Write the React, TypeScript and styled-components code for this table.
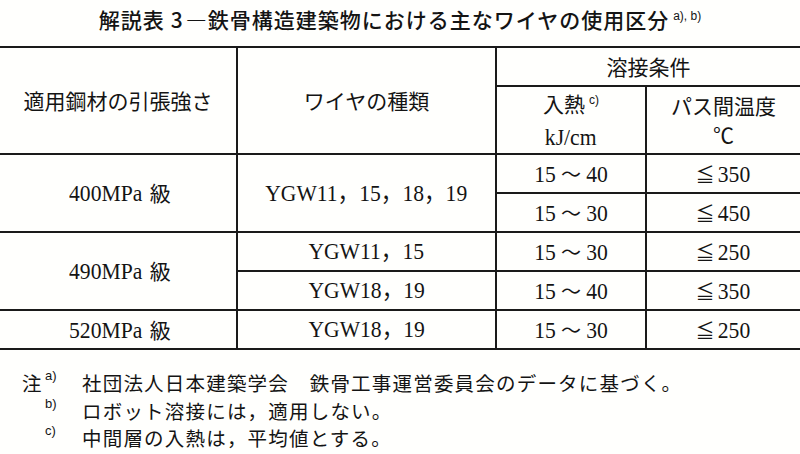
import React from "react";
import styled, { createGlobalStyle } from "styled-components";

const Global = createGlobalStyle`
  html, body { margin: 0; padding: 0; background: #ffffff; }
  body {
    font-family: "Liberation Serif", "Noto Sans CJK JP", serif;
    color: #141414;
  }
`;

const Page = styled.div`
  width: 800px;
  height: 454px;
  overflow: hidden;
  background: #fffffd;
  display: flex;
  flex-direction: column;
`;

const Title = styled.h1`
  margin: 0;
  height: 46px;
  box-sizing: border-box;
  padding-top: 5px;
  text-align: center;
  font-family: "Noto Sans CJK JP", sans-serif;
  font-size: 21px;
  font-weight: 500;
  line-height: 28px;
  letter-spacing: 1px;
  white-space: nowrap;
`;

const TitleNum = styled.span`
  margin: 0 2px 0 6px;
`;

const Sup = styled.span`
  font-family: "Liberation Sans", sans-serif;
  font-size: 12px;
  font-weight: 400;
  letter-spacing: 0;
  position: relative;
  top: -8px;
  margin-left: 4px;
`;

const Grid = styled.div`
  display: grid;
  grid-template-columns: 238px 259px 150px 1fr;
  grid-template-rows: 39px 68px repeat(5, 39px);
  border-top: 2px solid #1a1a1a;
`;

const Cell = styled.div<{ $col: string; $row: string; $last?: boolean }>`
  grid-column: ${(p) => p.$col};
  grid-row: ${(p) => p.$row};
  box-sizing: border-box;
  display: flex;
  flex-direction: column;
  align-items: center;
  justify-content: center;
  border-bottom: 2px solid #1a1a1a;
  border-right: ${(p) => (p.$last ? "none" : "2px solid #1a1a1a")};
  font-family: "Noto Sans CJK JP", sans-serif;
  font-size: 21px;
  line-height: 29px;
  white-space: nowrap;
`;

const Line = styled.div`
  display: flex;
  align-items: baseline;
  justify-content: center;
`;

const Num = styled.span`
  display: inline-block;
  font-family: "Liberation Serif", "Noto Sans CJK JP", serif;
  font-size: 24px;
  transform: scaleX(0.9);
`;

const Tilde = styled.span`
  font-family: "Noto Sans CJK JP", sans-serif;
  font-size: 20px;
  margin: 0 4px;
`;

const Le = styled.span`
  font-family: "Noto Sans CJK JP", sans-serif;
  font-size: 19px;
  margin-right: 1px;
`;

const Gap = styled.span`
  display: inline-block;
  width: 3px;
`;

const Notes = styled.div`
  padding-top: 19px;
  display: flex;
  flex-direction: column;
  font-family: "Noto Sans CJK JP", sans-serif;
  font-size: 19.5px;
  letter-spacing: 1.2px;
  line-height: 27.5px;
`;

const NoteRow = styled.div`
  display: flex;
  white-space: nowrap;
`;

const NoteMark = styled.div`
  width: 82px;
  box-sizing: border-box;
  padding-left: 22px;
  display: flex;
`;

const NoteLabel = styled.span`
  width: 19px;
`;

const NoteSup = styled(Sup)`
  font-size: 13px;
  top: -7px;
`;

type Body = { col: string; row: string; last?: boolean; kind: "grade" | "wire" | "heat" | "temp"; value: string };

const body: Body[] = [
  { col: "1", row: "3 / 5", kind: "grade", value: "400MPa" },
  { col: "2", row: "3 / 5", kind: "wire", value: "YGW11，15，18，19" },
  { col: "3", row: "3", kind: "heat", value: "15-40" },
  { col: "4", row: "3", kind: "temp", value: "350", last: true },
  { col: "3", row: "4", kind: "heat", value: "15-30" },
  { col: "4", row: "4", kind: "temp", value: "450", last: true },
  { col: "1", row: "5 / 7", kind: "grade", value: "490MPa" },
  { col: "2", row: "5", kind: "wire", value: "YGW11，15" },
  { col: "3", row: "5", kind: "heat", value: "15-30" },
  { col: "4", row: "5", kind: "temp", value: "250", last: true },
  { col: "2", row: "6", kind: "wire", value: "YGW18，19" },
  { col: "3", row: "6", kind: "heat", value: "15-40" },
  { col: "4", row: "6", kind: "temp", value: "350", last: true },
  { col: "1", row: "7", kind: "grade", value: "520MPa" },
  { col: "2", row: "7", kind: "wire", value: "YGW18，19" },
  { col: "3", row: "7", kind: "heat", value: "15-30" },
  { col: "4", row: "7", kind: "temp", value: "250", last: true },
];

function renderBody(b: Body) {
  if (b.kind === "grade") {
    return (
      <Line>
        <Num>{b.value}</Num>
        <Gap />
        <span>級</span>
      </Line>
    );
  }
  if (b.kind === "wire") {
    return (
      <Line>
        <Num>{b.value}</Num>
      </Line>
    );
  }
  if (b.kind === "heat") {
    const [a, c] = b.value.split("-");
    return (
      <Line>
        <Num>{a}</Num>
        <Tilde>～</Tilde>
        <Num>{c}</Num>
      </Line>
    );
  }
  return (
    <Line>
      <Le>≦</Le>
      <Num>{b.value}</Num>
    </Line>
  );
}

const notes = [
  { mark: "注", sup: "a)", text: "社団法人日本建築学会　鉄骨工事運営委員会のデータに基づく。" },
  { mark: "", sup: "b)", text: "ロボット溶接には，適用しない。" },
  { mark: "", sup: "c)", text: "中間層の入熱は，平均値とする。" },
];

export default function App() {
  return (
    <Page>
      <Global />
      <Title>
        解説表<TitleNum>3</TitleNum>―鉄骨構造建築物における主なワイヤの使用区分
        <Sup>a), b)</Sup>
      </Title>
      <Grid>
        <Cell $col="1" $row="1 / 3">適用鋼材の引張強さ</Cell>
        <Cell $col="2" $row="1 / 3">ワイヤの種類</Cell>
        <Cell $col="3 / 5" $row="1" $last>溶接条件</Cell>
        <Cell $col="3" $row="2">
          <Line>
            入熱<Sup>c)</Sup>
          </Line>
          <Line>
            <Num>kJ/cm</Num>
          </Line>
        </Cell>
        <Cell $col="4" $row="2" $last>
          <Line>パス間温度</Line>
          <Line>℃</Line>
        </Cell>
        {body.map((b, i) => (
          <Cell key={i} $col={b.col} $row={b.row} $last={b.last}>
            {renderBody(b)}
          </Cell>
        ))}
      </Grid>
      <Notes>
        {notes.map((n) => (
          <NoteRow key={n.sup}>
            <NoteMark>
              <NoteLabel>{n.mark}</NoteLabel>
              <NoteSup>{n.sup}</NoteSup>
            </NoteMark>
            <span>{n.text}</span>
          </NoteRow>
        ))}
      </Notes>
    </Page>
  );
}
